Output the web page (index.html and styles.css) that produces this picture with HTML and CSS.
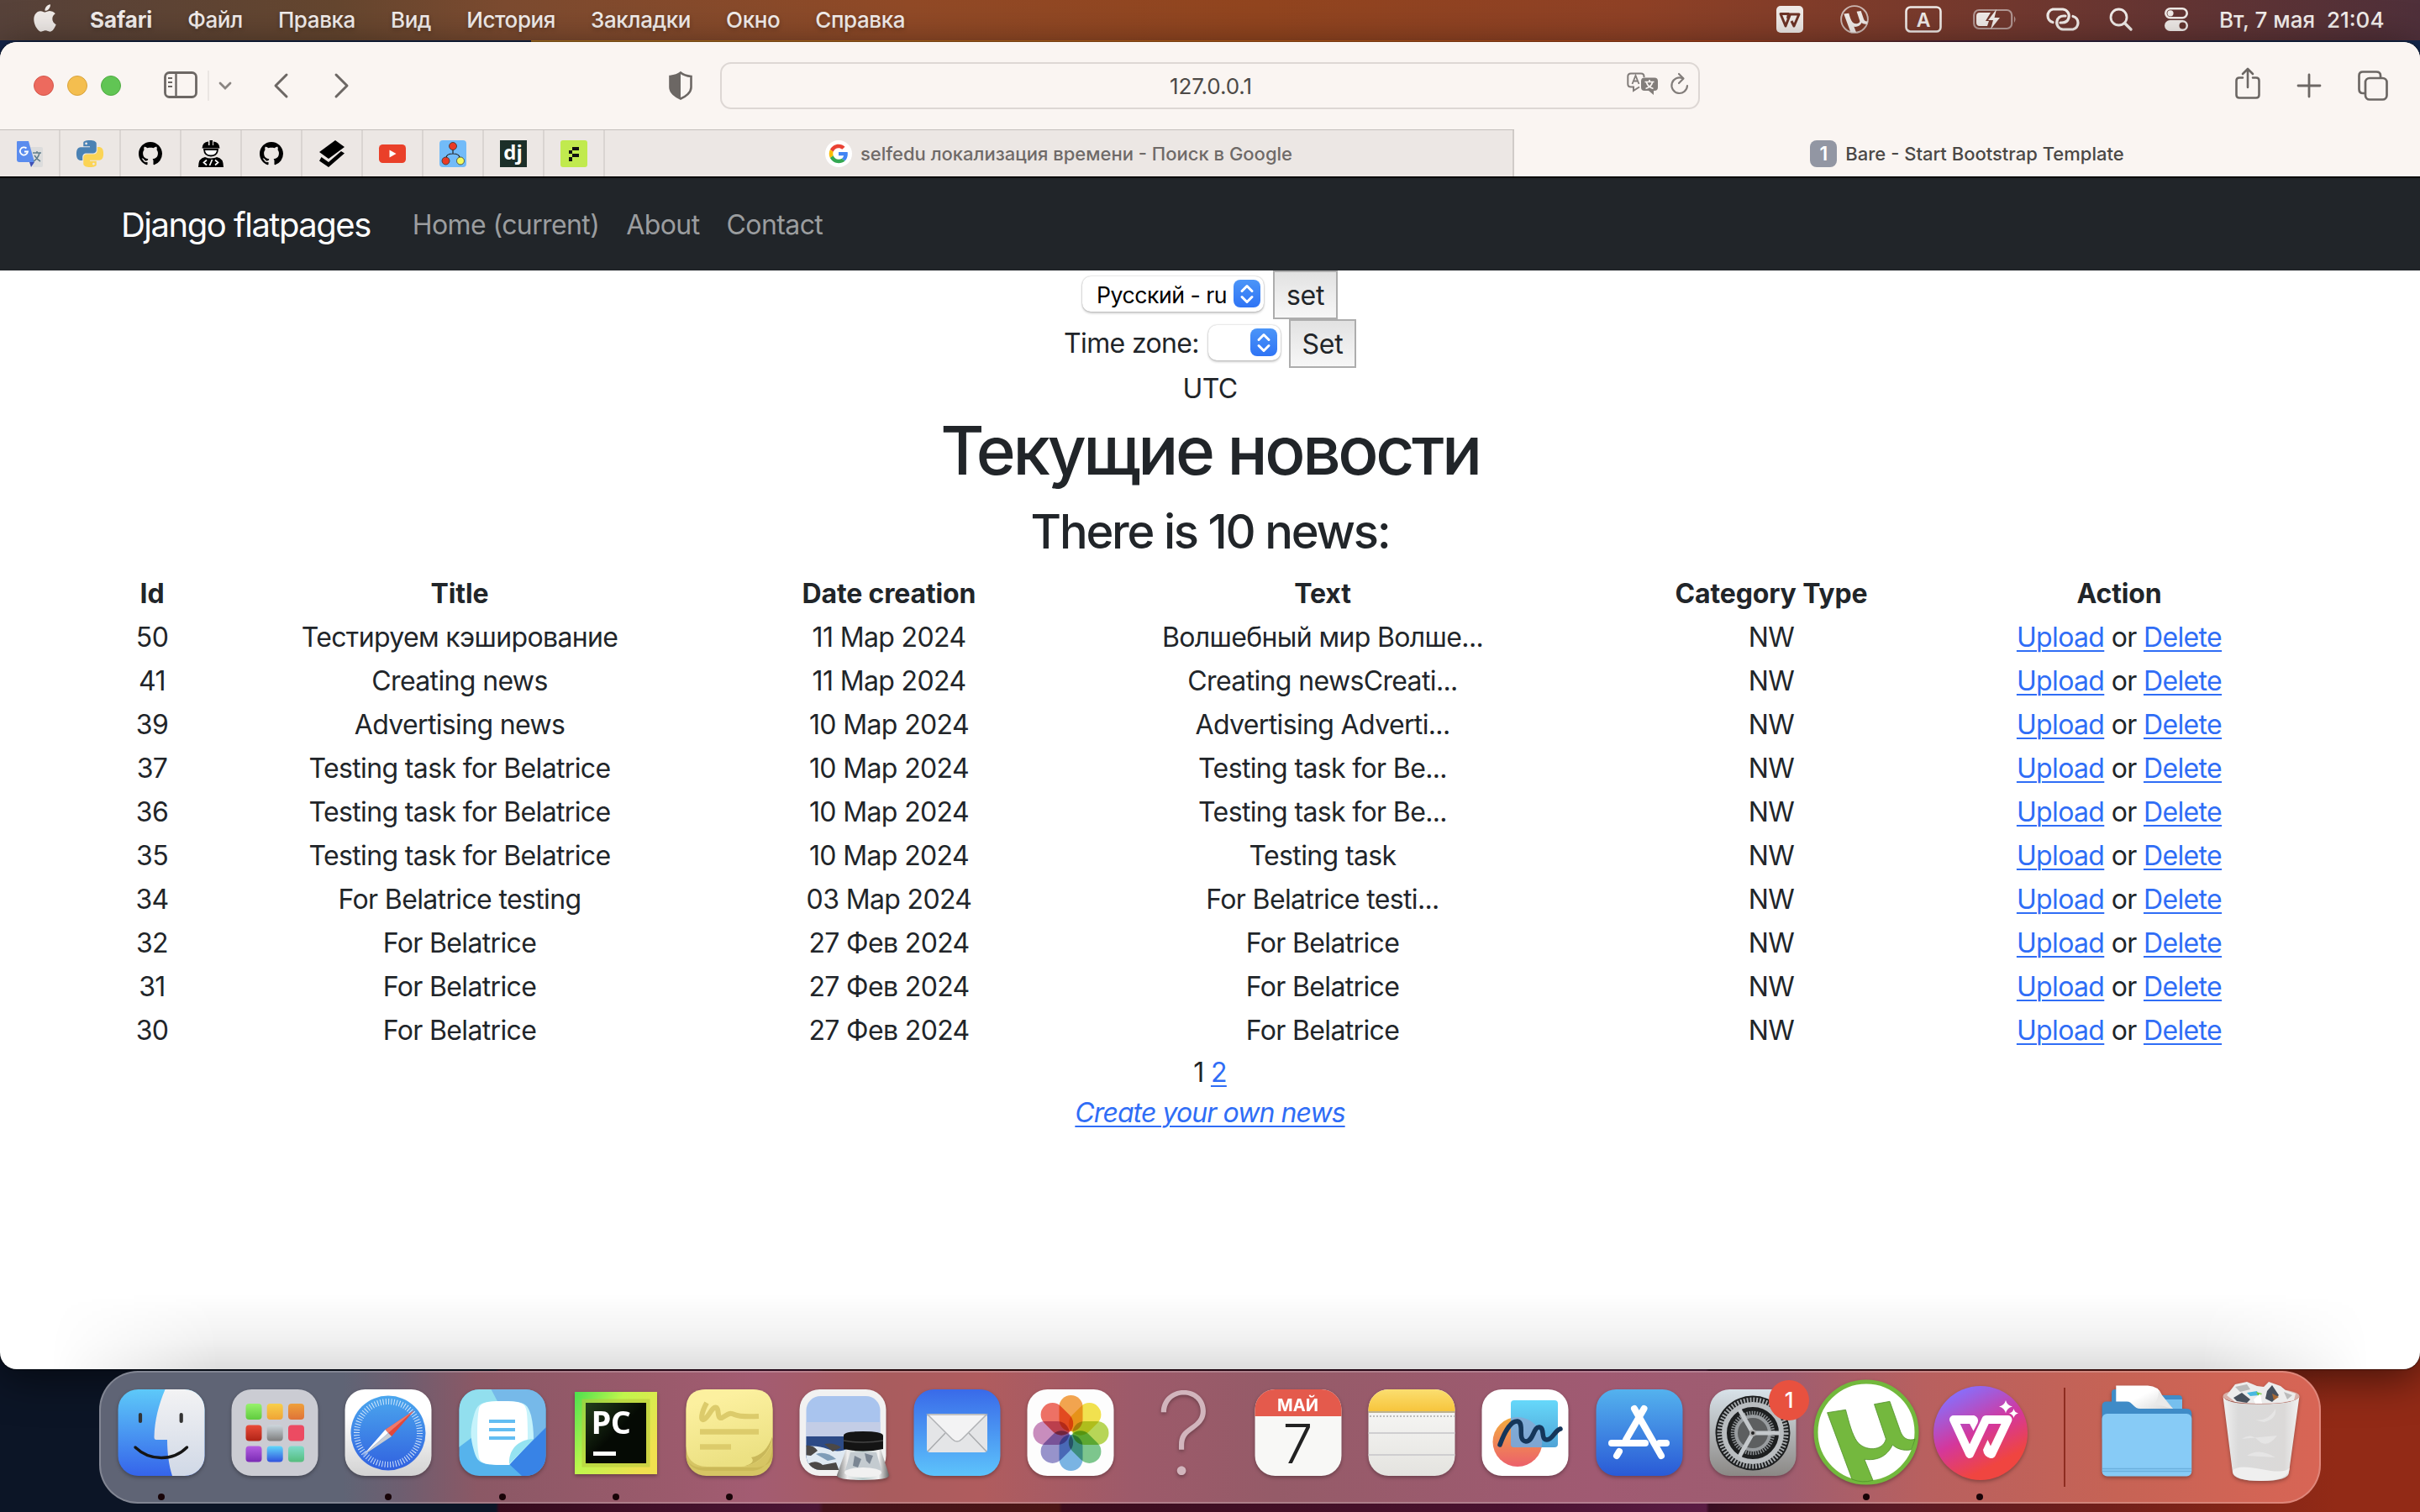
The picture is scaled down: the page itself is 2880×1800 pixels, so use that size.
FILE: index.html
```html
<!DOCTYPE html>
<html lang="ru">
<head>
<meta charset="utf-8">
<title>Bare - Start Bootstrap Template</title>
<link rel="stylesheet" href="styles.css">
</head>
<body>
<div class="desktop">

<header class="menubar">
  <svg class="apple" viewBox="2 0 20 24"><path fill="#f0ebe8" d="M12.152 6.896c-.948 0-2.415-1.078-3.96-1.04-2.04.027-3.91 1.183-4.961 3.014-2.117 3.675-.546 9.103 1.519 12.09 1.013 1.454 2.208 3.09 3.792 3.039 1.52-.065 2.09-.987 3.935-.987 1.831 0 2.35.987 3.96.948 1.637-.026 2.676-1.48 3.676-2.948 1.156-1.688 1.636-3.325 1.662-3.415-.039-.013-3.182-1.221-3.22-4.857-.026-3.04 2.48-4.494 2.597-4.559-1.429-2.09-3.623-2.324-4.39-2.376-2-.156-3.675 1.09-4.61 1.09zM15.53 3.83c.843-1.012 1.4-2.427 1.245-3.83-1.207.052-2.662.805-3.532 1.818-.78.896-1.454 2.338-1.273 3.714 1.338.104 2.715-.688 3.559-1.701"/></svg>
  <nav class="menus">
    <span class="app-name">Safari</span><span>Файл</span><span>Правка</span><span>Вид</span><span>История</span><span>Закладки</span><span>Окно</span><span>Справка</span>
  </nav>
  <div class="status">
    <svg width="32" height="32" viewBox="0 0 32 32"><rect width="32" height="32" rx="5" fill="#f0ebe8"/><path d="M13.500 15L14.500 9.500H5L11 24L16.500 10H27L21 24L18 18" fill="none" stroke="#6e3326" stroke-width="3" stroke-linejoin="round"/></svg>
    <svg width="34" height="34" viewBox="-10 -10 124 124"><circle cx="52" cy="52" r="58" fill="none" stroke="#cdb9b3" stroke-width="7"/><path fill="#f0ebe8" d="M5.600 28.700L27.500 25.300C32 42 36 54 43 64C50 73 72 75 75.400 60L61.500 18.700L80 15.300L92 50C96 60 102 62 109.400 60.300L105.700 72.700C96 75 87 71 83.400 67C76 82 64 86 49.800 84.300L60 109.300L35 108Z"/></svg>
    <svg width="44" height="32" viewBox="0 0 44 32"><rect x="1.500" y="1.500" width="41" height="29" rx="5" fill="none" stroke="#f0ebe8" stroke-width="2.600"/><text x="22" y="24.500" text-anchor="middle" class="key-letter">A</text></svg>
    <svg width="52" height="26" viewBox="0 0 52 26"><rect x="1.200" y="2" width="45" height="22" rx="6" fill="none" stroke="#b29793" stroke-width="2.200"/><path d="M8 5H21L15 15H19L17 21H8Q4 21 4 17V9Q4 5 8 5Z" fill="#f0ebe8"/><path d="M28 1L18 14H24L21 25L32 11H25.500Z" fill="#f0ebe8"/><path d="M49 9q3 4 0 8z" fill="#b29793"/></svg>
    <svg width="44" height="28" viewBox="0 0 44 28"><g fill="none" stroke="#f0ebe8" stroke-width="3.200" stroke-linecap="round"><path d="M10 17.500A8 8 0 0 1 10 2H22A8 8 0 0 1 29 12C28 16 25 18 21 18H19"/><path d="M34 10.500A8 8 0 0 1 34 26H22A8 8 0 0 1 15 16C16 12 19 10 23 10H25"/></g></svg>
    <svg width="28" height="28" viewBox="0 0 28 28"><circle cx="11.500" cy="11.500" r="9.500" fill="none" stroke="#f0ebe8" stroke-width="2.800"/><path d="M18.500 18.500L26 26" stroke="#f0ebe8" stroke-width="3.400" stroke-linecap="round"/></svg>
    <svg width="28" height="28" viewBox="0 0 28 28"><rect x="1.300" y="1.300" width="25.400" height="11" rx="5.500" fill="none" stroke="#f0ebe8" stroke-width="2.600"/><circle cx="7" cy="6.800" r="3.600" fill="#f0ebe8"/><rect y="15" width="28" height="13" rx="6.500" fill="#f0ebe8"/><circle cx="21.500" cy="21.500" r="4" fill="#653630"/></svg>
    <span class="clock">Вт, 7 мая&nbsp; 21:04</span>
  </div>
</header>

<main class="window">
  <div class="toolbar">
    <div class="lights"><i class="red"></i><i class="yellow"></i><i class="green"></i></div>
    <svg class="ic-sidebar" width="40" height="32" viewBox="0 0 40 32"><g fill="none" stroke="#6c6764"><rect x="1.500" y="1.500" width="37" height="29" rx="5" stroke-width="2.800"/><path d="M14.500 2V30" stroke-width="2.400"/><path d="M5 8H10M5 13H10M5 18H10" stroke-width="2"/></g></svg>
    <i class="divider"></i>
    <svg class="ic-chev" width="16" height="10" viewBox="0 0 16 10"><path d="M2 2L8 8L14 2" fill="none" stroke="#8a8582" stroke-width="2.800" stroke-linecap="round"/></svg>
    <svg class="ic-back" width="18" height="30" viewBox="0 0 18 30"><path d="M16 2L3 15L16 28" fill="none" stroke="#6c6764" stroke-width="3" stroke-linecap="round" stroke-linejoin="round"/></svg>
    <svg class="ic-fwd" width="18" height="30" viewBox="0 0 18 30"><path d="M2 2L15 15L2 28" fill="none" stroke="#6c6764" stroke-width="3" stroke-linecap="round" stroke-linejoin="round"/></svg>
    <svg class="ic-shield" width="28" height="34" viewBox="0 0 28 34"><path d="M14 1.500C17 4 22 5.500 26.500 6V19C26.500 25 20 30 14 32.500C8 30 1.500 25 1.500 19V6C6 5.500 11 4 14 1.500Z" fill="none" stroke="#6c6764" stroke-width="2.600"/><path d="M14 1.500C11 4 6 5.500 1.500 6V19C1.500 25 8 30 14 32.500Z" fill="#6c6764"/></svg>
    <div class="address">
      <span class="url">127.0.0.1</span>
      <svg class="ic-translate" width="38" height="28" viewBox="0 0 38 28"><path d="M15 17.500L8 22V17.500H5Q1.300 17.500 1.300 14V5Q1.300 1.500 5 1.500H17Q20.500 1.500 20.500 5V6" fill="none" stroke="#827d7a" stroke-width="2"/><path d="M6.500 14L10.500 4L14.500 14M8 10.500H13" fill="none" stroke="#827d7a" stroke-width="1.800"/><path d="M21 6.500H33Q37 6.500 37 10.500V18Q37 22 33 22H32V27L26 22H21Q17 22 17 18V10.500Q17 6.500 21 6.500Z" fill="#827d7a"/><path d="M21.500 11.500H32.500M27 9V11.500M30.500 12C29.500 16 26 18.500 22.500 19.500M23.500 12C24.500 16 28 18.500 31.500 19.500" stroke="#faf5f2" stroke-width="1.700" fill="none"/></svg>
      <svg class="ic-reload" width="22" height="28" viewBox="0 0 22 28"><path d="M14.500 7.200A9.300 9.300 0 1 0 20 16" fill="none" stroke="#827d7a" stroke-width="2.200" stroke-linecap="round"/><path d="M10 2L15.500 7.500L10 13" fill="none" stroke="#827d7a" stroke-width="2.200" stroke-linecap="round" stroke-linejoin="round"/></svg>
    </div>
    <svg class="ic-share" width="30" height="38" viewBox="0 0 30 38"><g fill="none" stroke="#6c6764" stroke-width="2.600" stroke-linecap="round" stroke-linejoin="round"><path d="M9 12.500H5Q1.500 12.500 1.500 16V33Q1.500 36.500 5 36.500H25Q28.500 36.500 28.500 33V16Q28.500 12.500 25 12.500H21"/><path d="M15 24V2M9 8L15 2L21 8"/></g></svg>
    <svg class="ic-plus" width="28" height="28" viewBox="0 0 28 28"><path d="M14 1V27M1 14H27" stroke="#6c6764" stroke-width="2.800" stroke-linecap="round"/></svg>
    <svg class="ic-tabs" width="36" height="36" viewBox="0 0 36 36"><g fill="none" stroke="#6c6764" stroke-width="2.700"><rect x="9" y="9" width="25.500" height="25.500" rx="5"/><path d="M9 27H6Q1.500 27 1.500 22V6Q1.500 1.500 6 1.500H22Q27 1.500 27 6V9"/></g></svg>
  </div>

  <div class="tabbar">
    <div class="pin"><svg viewBox="0 0 32 32"><path d="M14 8H30Q32 8 32 10V30Q32 32 30 32H20Z" fill="#dcdcdc"/><path d="M2 1H15L22 26H4Q1 26 1 23V2Q1 1 2 1Z" fill="#5b8cee"/><path d="M16 26H22L18 32Z" fill="#3f51b5"/><path d="M12.500 9.500A4.600 4.600 0 1 0 14 13.500H10" fill="none" stroke="#fff" stroke-width="1.800"/><path d="M20 15H30M25 13V15M28 15C27 20 23 24 21 25M22 18C24 21 27 24 29 25" fill="none" stroke="#607d8b" stroke-width="1.500"/></svg></div>
    <div class="pin"><svg viewBox="0 0 24 24"><defs><path id="py" d="M14.250.18l.9.2.73.26.59.3.45.32.34.34.25.34.16.33.1.3.04.26.02.2-.01.13V8.500l-.05.63-.13.55-.21.46-.26.38-.3.31-.33.25-.35.19-.35.14-.33.1-.3.07-.26.04-.21.02H8.770l-.69.05-.59.14-.5.22-.41.27-.33.32-.27.35-.2.36-.15.37-.1.35-.07.32-.04.27-.02.21v3.060H3.170l-.21-.03-.28-.07-.32-.12-.35-.18-.36-.26-.36-.36-.35-.46-.32-.59-.28-.73-.21-.88-.14-1.050-.05-1.230.06-1.220.16-1.040.24-.87.32-.71.36-.57.4-.44.42-.33.42-.24.4-.16.36-.1.32-.05.24-.01h.16l.06.01h8.160v-.83H6.180l-.01-2.750-.02-.37.05-.34.11-.31.17-.28.25-.26.31-.23.38-.2.44-.18.51-.15.58-.12.64-.1.71-.06.77-.04.84-.02 1.270.05zm-6.300 1.980l-.23.33-.08.41.08.41.23.34.33.22.41.09.41-.09.33-.22.23-.34.08-.41-.08-.41-.23-.33-.33-.22-.41-.09-.41.09z"/></defs><use href="#py" fill="#4b82b4"/><use href="#py" fill="#fbd456" transform="rotate(180 12 12)"/></svg></div>
    <div class="pin"><svg class="small" viewBox="0 0 16 16"><path id="gh" d="M8 0C3.580 0 0 3.580 0 8c0 3.540 2.290 6.530 5.470 7.590.4.07.55-.17.55-.38 0-.19-.01-.82-.01-1.490-2.010.37-2.530-.49-2.690-.94-.09-.23-.48-.94-.82-1.130-.28-.15-.68-.52-.01-.53.63-.01 1.080.58 1.230.82.72 1.210 1.870.87 2.330.66.07-.52.28-.87.51-1.070-1.780-.2-3.640-.89-3.640-3.950 0-.87.31-1.590.82-2.150-.08-.2-.36-1.020.08-2.120 0 0 .67-.21 2.200.82.64-.18 1.320-.27 2-.27.68 0 1.360.09 2 .27 1.530-1.040 2.200-.82 2.200-.82.44 1.100.16 1.920.08 2.120.51.56.82 1.270.82 2.150 0 3.070-1.870 3.750-3.650 3.950.29.25.54.73.54 1.480 0 1.070-.01 1.930-.01 2.200 0 .21.15.46.55.38A8.010 8.010 0 0 0 16 8c0-4.420-3.580-8-8-8z"/></svg></div>
    <div class="pin"><svg viewBox="0 0 32 32"><path d="M5.500 9.500Q6 2 13 1.500V6H14.500V0H18V6H19V1.500Q26 2 26.500 9.500Z"/><path d="M8 11H24Q23.500 18.500 16 18.500T8 11Z" fill="#fff" stroke="#000" stroke-width="1.800"/><path d="M1 32Q1 21 9 20Q16 23 23 20Q31 21 31 32Z"/><path d="M11 23.500L7.500 26.500L11 29.500M21 23.500L24.500 26.500L21 29.500M17.500 23L14.500 30" fill="none" stroke="#fff" stroke-width="1.700"/></svg></div>
    <div class="pin"><svg class="small" viewBox="0 0 16 16"><use href="#gh"/></svg></div>
    <div class="pin"><svg viewBox="0 0 32 32"><path d="M20 0L31 8L12 22L1 14Z"/><path d="M27 13L31 15.500L12 32L1 24.500L3.500 20L12 26Z"/></svg></div>
    <div class="pin"><svg viewBox="0 0 32 32"><rect y="5" width="32" height="22" rx="4.500" fill="#ea4029"/><path d="M12.500 11.500V20.500L20.500 16Z" fill="#fff"/></svg></div>
    <div class="pin"><svg viewBox="0 0 32 32"><rect width="32" height="32" rx="4" fill="#72bbf8"/><path d="M16 11V16M8 21Q8 16 16 16T24 21" fill="none" stroke="#222" stroke-width="1.200"/><g stroke="#333" stroke-width=".8"><circle cx="16" cy="7" r="4.500" fill="#ea3b26"/><circle cx="7.500" cy="24.500" r="4.500" fill="#ea3b26"/><circle cx="25" cy="24.500" r="4.500" fill="#f2fb62"/></g></svg></div>
    <div class="pin"><svg viewBox="0 0 32 32"><rect width="32" height="32" fill="#1c2f29"/><text x="15.500" y="23" text-anchor="middle" class="dj">dj</text></svg></div>
    <div class="pin"><svg viewBox="0 0 32 32"><rect width="32" height="32" rx="3" fill="#c1ea4e"/><path d="M14 8H22V12H14ZM10 12H14V16H10ZM14 16H22V20H14ZM10 20H14V25H10Z" fill="#111"/></svg></div>
    <div class="tab">
      <svg class="fav" viewBox="-10 -10 68 68"><circle cx="24" cy="24" r="34" fill="#fff"/><path fill="#ea4335" d="M24 9.500c3.540 0 6.710 1.220 9.210 3.600l6.850-6.850C35.900 2.380 30.470 0 24 0 14.620 0 6.510 5.380 2.560 13.220l7.980 6.190C12.430 13.720 17.740 9.500 24 9.500z"/><path fill="#4285f4" d="M46.980 24.550c0-1.570-.15-3.090-.38-4.550H24v9.020h12.940c-.58 2.960-2.260 5.480-4.780 7.180l7.730 6c4.510-4.180 7.090-10.360 7.090-17.650z"/><path fill="#fbbc05" d="M10.530 28.590c-.48-1.450-.76-2.990-.76-4.590s.27-3.140.76-4.590l-7.980-6.190C.92 16.460 0 20.120 0 24c0 3.880.92 7.540 2.560 10.780l7.970-6.190z"/><path fill="#34a853" d="M24 48c6.480 0 11.930-2.130 15.890-5.810l-7.730-6c-2.150 1.450-4.920 2.300-8.160 2.300-6.260 0-11.570-4.220-13.470-9.910l-7.980 6.190C6.510 42.620 14.620 48 24 48z"/></svg>
      <span class="tab-title">selfedu локализация времени - Поиск в Google</span>
    </div>
    <div class="tab active">
      <b class="letter">1</b>
      <span class="tab-title">Bare - Start Bootstrap Template</span>
    </div>
  </div>

  <nav class="navbar"><a class="brand">Django flatpages</a><a>Home (current)</a><a>About</a><a>Contact</a></nav>

  <section class="page">
    <div class="form-row">
      <span class="select"><span>Русский - ru</span><i class="knob"><svg width="18" height="24" viewBox="0 0 18 24"><path d="M3 8.500L9 2.500L15 8.500M3 15.500L9 21.500L15 15.500" fill="none" stroke="#fff" stroke-width="3" stroke-linecap="round" stroke-linejoin="round"/></svg></i></span>
      <button class="btn b1">set</button>
    </div>
    <div class="form-row">
      <label>Time zone:</label>
      <span class="select empty"><i class="knob"><svg width="18" height="24" viewBox="0 0 18 24"><path d="M3 8.500L9 2.500L15 8.500M3 15.500L9 21.500L15 15.500" fill="none" stroke="#fff" stroke-width="3" stroke-linecap="round" stroke-linejoin="round"/></svg></i></span>
      <button class="btn b2">Set</button>
    </div>
    <p class="line zone">UTC</p>
    <h1>Текущие новости</h1>
    <h2>There is 10 news:</h2>
    <table>
      <colgroup><col class="c1"><col class="c2"><col class="c3"><col class="c4"><col class="c5"><col class="c6"></colgroup>
      <tr><th>Id</th><th>Title</th><th>Date creation</th><th>Text</th><th>Category Type</th><th>Action</th></tr>
      <tr><td>50</td><td>Тестируем кэширование</td><td>11 Мар 2024</td><td>Волшебный мир Волше...</td><td>NW</td><td><a>Upload</a> or <a>Delete</a></td></tr>
      <tr><td>41</td><td>Creating news</td><td>11 Мар 2024</td><td>Creating newsCreati...</td><td>NW</td><td><a>Upload</a> or <a>Delete</a></td></tr>
      <tr><td>39</td><td>Advertising news</td><td>10 Мар 2024</td><td>Advertising Adverti...</td><td>NW</td><td><a>Upload</a> or <a>Delete</a></td></tr>
      <tr><td>37</td><td>Testing task for Belatrice</td><td>10 Мар 2024</td><td>Testing task for Be...</td><td>NW</td><td><a>Upload</a> or <a>Delete</a></td></tr>
      <tr><td>36</td><td>Testing task for Belatrice</td><td>10 Мар 2024</td><td>Testing task for Be...</td><td>NW</td><td><a>Upload</a> or <a>Delete</a></td></tr>
      <tr><td>35</td><td>Testing task for Belatrice</td><td>10 Мар 2024</td><td>Testing task</td><td>NW</td><td><a>Upload</a> or <a>Delete</a></td></tr>
      <tr><td>34</td><td>For Belatrice testing</td><td>03 Мар 2024</td><td>For Belatrice testi...</td><td>NW</td><td><a>Upload</a> or <a>Delete</a></td></tr>
      <tr><td>32</td><td>For Belatrice</td><td>27 Фев 2024</td><td>For Belatrice</td><td>NW</td><td><a>Upload</a> or <a>Delete</a></td></tr>
      <tr><td>31</td><td>For Belatrice</td><td>27 Фев 2024</td><td>For Belatrice</td><td>NW</td><td><a>Upload</a> or <a>Delete</a></td></tr>
      <tr><td>30</td><td>For Belatrice</td><td>27 Фев 2024</td><td>For Belatrice</td><td>NW</td><td><a>Upload</a> or <a>Delete</a></td></tr>
    </table>
    <p class="line">1 <a>2</a></p>
    <p class="line create"><a><em>Create your own news</em></a></p>
  </section>
  <div class="dock-shade"></div>
</main>

<footer class="dock">
  <div class="item run"><svg viewBox="0 0 104 104">
    <defs><linearGradient id="fb" x2="0" y2="1"><stop stop-color="#5ecaf9"/><stop offset="1" stop-color="#3564ea"/></linearGradient><linearGradient id="fw" x2="0" y2="1"><stop stop-color="#f3f3f4"/><stop offset="1" stop-color="#d0d8e6"/></linearGradient><clipPath id="sq"><rect x=".5" y="1" width="103" height="103" rx="24"/></clipPath></defs>
    <g clip-path="url(#sq)"><rect width="104" height="104" fill="url(#fb)"/><path d="M57 0C49 18 44 38 43.500 58Q43.500 61 46 61H59C59 77 61 92 65 104H104V0Z" fill="url(#fw)"/></g>
    <path d="M27 31V39M75.700 31V39" stroke="#333" stroke-width="4.200" stroke-linecap="round"/><path d="M21 70Q34 82.500 52 82.500T82.500 70" fill="none" stroke="#151515" stroke-width="3.400" stroke-linecap="round"/></svg></div>
  <div class="item"><svg viewBox="0 0 104 104">
    <defs><linearGradient id="l1" x2="0" y2="1"><stop stop-color="#97f26c"/><stop offset="1" stop-color="#60cb3f"/></linearGradient><linearGradient id="l2" x2="0" y2="1"><stop stop-color="#f8cf4a"/><stop offset="1" stop-color="#efa436"/></linearGradient><linearGradient id="l3" x2="0" y2="1"><stop stop-color="#efa03a"/><stop offset="1" stop-color="#df7338"/></linearGradient><linearGradient id="l4" x2="0" y2="1"><stop stop-color="#ea4b38"/><stop offset="1" stop-color="#b02417"/></linearGradient><linearGradient id="l5" x2="0" y2="1"><stop stop-color="#ccd6dc"/><stop offset="1" stop-color="#7d7d7d"/></linearGradient><linearGradient id="l7" x2="0" y2="1"><stop stop-color="#b45ee2"/><stop offset="1" stop-color="#7a2bb4"/></linearGradient><linearGradient id="l8" x2="0" y2="1"><stop stop-color="#5fd7fb"/><stop offset="1" stop-color="#3052de"/></linearGradient><linearGradient id="l9" x2="0" y2="1"><stop stop-color="#7fdccb"/><stop offset="1" stop-color="#55bd7d"/></linearGradient></defs>
    <rect x=".5" y="1" width="103" height="103" rx="24" fill="#cbccd3"/>
    <rect x="17.500" y="18" width="19" height="19" rx="4" fill="url(#l1)"/><rect x="42.700" y="18" width="19" height="19" rx="4" fill="url(#l2)"/><rect x="68" y="18" width="19" height="19" rx="4" fill="url(#l3)"/>
    <rect x="17.500" y="43.500" width="19" height="19" rx="4" fill="url(#l4)"/><rect x="42.700" y="43.500" width="19" height="19" rx="4" fill="url(#l5)"/><rect x="68" y="43.500" width="19" height="19" rx="4" fill="#ec4b62"/>
    <rect x="17.500" y="68.500" width="19" height="19" rx="4" fill="url(#l7)"/><rect x="42.700" y="68.500" width="19" height="19" rx="4" fill="url(#l8)"/><rect x="68" y="68.500" width="19" height="19" rx="4" fill="url(#l9)"/></svg></div>
  <div class="item run"><svg viewBox="0 0 104 104">
    <defs><linearGradient id="s1" x2="0" y2="1"><stop offset=".3" stop-color="#fff"/><stop offset="1" stop-color="#d2d2d2"/></linearGradient><linearGradient id="s2" x2="0" y2="1"><stop stop-color="#4ba7ee"/><stop offset="1" stop-color="#3161df"/></linearGradient></defs>
    <rect x=".5" y="1" width="103" height="103" rx="24" fill="url(#s1)"/><circle cx="52" cy="53" r="44.500" fill="url(#s2)"/>
    <circle cx="52" cy="53" r="37.500" fill="none" stroke="#e8f2fd" stroke-width="7" stroke-dasharray="1 2.270" opacity=".85"/>
    <path d="M83 26L56 57L48.500 49Z" fill="#e2483b"/><path d="M83 26L48.500 49L52 53Z" fill="#ee7a6c"/><path d="M21.500 80L48.500 49L52 53Z" fill="#fff"/><path d="M21.500 80L56 57L52 53Z" fill="#c9cdd3"/></svg></div>
  <div class="item run"><svg viewBox="0 0 104 104">
    <g clip-path="url(#sq)"><rect width="104" height="104" fill="#56b3ec"/><path d="M0 0H38L60 25L0 70Z" fill="#92dfee"/><path d="M38 0H104V46L80 80Z" fill="#76b9e9"/><path d="M104 46V104H75L60 90Z" fill="#3883e6"/></g>
    <path d="M52 15C78 15 82 18 86 32Q89 45 89 60L60 91H52C26 91 22 88 18 74Q14.500 62 14.500 53T18 32C22 18 26 15 52 15Z" fill="#c6f3fb"/><path d="M52 15C72 15 78 17 80 24Q82 30 82 60L60 91H52C32 91 26 89 24 82Q22 72 22 53T24 24C26 17 32 15 52 15Z" fill="#fff"/><path d="M89 60L60 90C59 75 68 61 89 60Z" fill="#95e3f1"/><path d="M36 39H67M36 49H67M36 59H67" stroke="#63bdf2" stroke-width="4.200"/></svg></div>
  <div class="item run"><svg viewBox="0 0 104 104">
    <defs><linearGradient id="pc" x2="1" y2=".6"><stop stop-color="#4be04f"/><stop offset=".45" stop-color="#c0f64c"/><stop offset="1" stop-color="#f1e04f"/></linearGradient><linearGradient id="pk" x2=".5" y2=".5"><stop stop-color="#24401c"/><stop offset="1" stop-color="#050a04"/></linearGradient></defs>
    <rect x="3" y="4" width="98" height="98" fill="url(#pc)"/><rect x="11.500" y="12.500" width="81" height="81" fill="#b5c93c" opacity=".6"/><rect x="16" y="17" width="72" height="72" fill="url(#pk)"/><text x="22.500" y="53.500" class="pc">PC</text><rect x="25" y="75" width="27" height="5" fill="#fff"/></svg></div>
  <div class="item run"><svg viewBox="0 0 104 104">
    <defs><linearGradient id="st" x2=".3" y2="1"><stop offset=".2" stop-color="#fcf09f"/><stop offset="1" stop-color="#ece183"/></linearGradient></defs>
    <rect x=".5" y="1" width="103" height="103" rx="24" fill="#d6c564"/><path d="M.5 82Q4 97 24 98H80Q104 95 104 60V80Q103 91 85 94H20Q3 94 .5 80Z" fill="#c3b050" opacity=".6"/>
    <path d="M24 1H80Q103.500 1 103.500 25V58C102 76 84 93 66 93H25Q1 92 .5 68V25Q.5 1 24 1Z" fill="url(#st)"/><path d="M103.500 56C98 72 90 80 78 82Q84 88 70 92.500C88 90 102 74 103.500 56Z" fill="#c9b85a"/>
    <path d="M25 17C18 30 18 38 21 37C28 35 31 20 37 23C40 26 37 36 43 35C50 31 52 28 58 31Q64 34 87 33" fill="none" stroke="#dccb6b" stroke-width="6"/><path d="M17 51.500H87M17 69.500H54" stroke="#dccb6b" stroke-width="6.500"/></svg></div>
  <div class="item"><svg viewBox="0 0 104 104">
    <defs><clipPath id="ph"><rect x="8.500" y="9" width="88" height="88" rx="17"/></clipPath><linearGradient id="jar" x2="1" y2="0"><stop stop-color="#777"/><stop offset=".2" stop-color="#eee"/><stop offset=".5" stop-color="#bcc"/><stop offset=".8" stop-color="#f2f2f2"/><stop offset="1" stop-color="#666"/></linearGradient></defs>
    <rect x=".5" y="1" width="103" height="103" rx="24" fill="#f1f1f1"/><g clip-path="url(#ph)"><rect width="104" height="104" fill="#a9c4ee"/><rect y="40" width="104" height="20" fill="#c3cde6"/><rect y="57" width="104" height="47" fill="#2c4a86"/><path d="M0 70Q20 66 34 72T60 70V104H0Z" fill="#dfe9f2"/><path d="M0 70Q15 64 22 74L14 80L0 78ZM30 66Q42 64 50 70L40 75ZM10 90Q20 84 28 91L44 88L50 104H8Z" fill="#4b4846"/><path d="M20 78Q32 74 44 84L34 86Z" fill="#7f9db8"/></g>
    <path d="M56 72H97L107 103Q108 109 76 109T45 103Z" fill="url(#jar)"/><path d="M61 76H92L98 97Q76 104 55 97Z" fill="#c4cbd0"/><ellipse cx="76" cy="100" rx="22" ry="6" fill="#f1f1f1"/><path d="M66 80L74 84L70 94L64 92ZM78 77L88 80L84 90L80 86Z" fill="#7a8592"/><path d="M53 56Q53 51 76 51T100 56V72Q76 77 53 72Z" fill="#141414"/><path d="M53 62Q76 66 100 62" stroke="#444" fill="none" stroke-width="1.500"/></svg></div>
  <div class="item"><svg viewBox="0 0 104 104">
    <defs><linearGradient id="ml" x2="0" y2="1"><stop stop-color="#396ae9"/><stop offset="1" stop-color="#5dc3fb"/></linearGradient></defs>
    <rect x=".5" y="1" width="103" height="103" rx="24" fill="url(#ml)"/><rect x="16" y="30" width="72" height="46" rx="4" fill="#e4e5e7"/><path d="M17 75L38 53M87 75L66 53" stroke="#a9abae" stroke-width="1.500"/><path d="M17 31L46 60Q52 66 58 60L87 31Z" fill="#f3f3f4" stroke="#b0b2b5" stroke-width="1.500"/></svg></div>
  <div class="item"><svg viewBox="0 0 104 104">
    <rect x=".5" y="1" width="103" height="103" rx="24" fill="#fdfdfd"/>
    <g class="petals"><rect x="38.500" y="8" width="28" height="43" rx="14" fill="#f39b3b"/><rect x="38.500" y="8" width="28" height="43" rx="14" fill="#f2e03c" transform="rotate(45 52.500 53)"/><rect x="38.500" y="8" width="28" height="43" rx="14" fill="#b2d346" transform="rotate(90 52.500 53)"/><rect x="38.500" y="8" width="28" height="43" rx="14" fill="#70c282" transform="rotate(135 52.500 53)"/><rect x="38.500" y="8" width="28" height="43" rx="14" fill="#6daee2" transform="rotate(180 52.500 53)"/><rect x="38.500" y="8" width="28" height="43" rx="14" fill="#8d88c8" transform="rotate(225 52.500 53)"/><rect x="38.500" y="8" width="28" height="43" rx="14" fill="#c582b8" transform="rotate(270 52.500 53)"/><rect x="38.500" y="8" width="28" height="43" rx="14" fill="#ee6255" transform="rotate(315 52.500 53)"/></g></svg></div>
  <div class="item"><svg viewBox="0 0 104 104"><text x="52" y="102" text-anchor="middle" class="missing">?</text></svg></div>
  <div class="item"><svg viewBox="0 0 104 104">
    <g clip-path="url(#sq)"><rect width="104" height="104" fill="#f8f8f6"/><rect width="104" height="33" fill="#e45a4c"/></g><text x="51.500" y="26.500" text-anchor="middle" class="cal-m">МАЙ</text><text x="51.500" y="89" text-anchor="middle" class="cal-d">7</text></svg></div>
  <div class="item"><svg viewBox="0 0 104 104">
    <defs><linearGradient id="ny" x2="0" y2="1"><stop stop-color="#fbdf72"/><stop offset="1" stop-color="#f7c53c"/></linearGradient><linearGradient id="nw" x2="0" y2="1"><stop stop-color="#fbfbfa"/><stop offset="1" stop-color="#e4e3df"/></linearGradient></defs>
    <g clip-path="url(#sq)"><rect width="104" height="104" fill="url(#nw)"/><rect width="104" height="27" fill="url(#ny)"/><path d="M0 28H104" stroke="#a99a6d" stroke-width="1.500"/><path d="M2 33H104" stroke="#bbb" stroke-width="2" stroke-dasharray="2 2"/><path d="M0 53H104M0 79H104" stroke="#cfced0" stroke-width="1.800"/></g></svg></div>
  <div class="item"><svg viewBox="0 0 104 104">
    <defs><linearGradient id="fo" x2="0" y2="1"><stop stop-color="#f3ad3e"/><stop offset="1" stop-color="#ec606b"/></linearGradient><linearGradient id="fq" x2="0" y2="1"><stop stop-color="#66d8fa"/><stop offset="1" stop-color="#4fa3d6"/></linearGradient></defs>
    <rect x=".5" y="1" width="103" height="103" rx="24" fill="#fff"/><circle cx="43" cy="63.500" r="29.500" fill="url(#fo)"/><rect x="35" y="14" width="56" height="56" rx="4" fill="url(#fq)"/><path d="M35 35A29.500 29.500 0 0 1 71.500 70H39Q35 70 35 66Z" fill="#8ea6d0" opacity=".75"/><path d="M22 67C27 53 35 38 43 39C52 41 42 62 53 63C62 63 62 45 69 46C76 47 70 61 78 61C85 61 87 50 94 48" fill="none" stroke="#15365a" stroke-width="5.500" stroke-linecap="round"/></svg></div>
  <div class="item"><svg viewBox="0 0 104 104">
    <defs><linearGradient id="as" x2="0" y2="1"><stop stop-color="#54b2ee"/><stop offset="1" stop-color="#2a5ad6"/></linearGradient></defs>
    <rect x=".5" y="1" width="103" height="103" rx="24" fill="url(#as)"/><g stroke="#fff" stroke-width="8" stroke-linecap="round"><path d="M46 24L78 80M57.500 24L36 61M28 75L25 80M19 65H59M76 65H84"/></g></svg></div>
  <div class="item"><svg viewBox="0 0 104 104">
    <defs><linearGradient id="sg" x2="0" y2="1"><stop stop-color="#d8e2e9"/><stop offset="1" stop-color="#8b8885"/></linearGradient></defs>
    <rect x=".5" y="1" width="103" height="103" rx="24" fill="url(#sg)"/><circle cx="52" cy="53" r="44.500" fill="#1d1f20"/><circle cx="52" cy="53" r="39.500" fill="none" stroke="#a7abae" stroke-width="6" stroke-dasharray="1.900 1.900"/><circle cx="52" cy="53" r="34" fill="none" stroke="#b9bdc0" stroke-width="6"/><circle cx="52" cy="53" r="24" fill="none" stroke="#8d9194" stroke-width="4.500" stroke-dasharray="1.500 1.500"/><circle cx="52" cy="53" r="20" fill="#5d5f60" stroke="#999da0" stroke-width="4"/><path d="M52 53H84M52 53L36 25M52 53L36 81" stroke="#c4c8cb" stroke-width="5"/><circle cx="52" cy="53" r="4" fill="#aaa"/><circle cx="52" cy="53" r="2" fill="#222"/></svg><b class="badge">1</b></div>
  <div class="item run"><svg viewBox="0 0 104 104">
    <circle cx="52" cy="52" r="60" fill="#fff" stroke="#72b83c" stroke-width="5"/><path fill="#74b83e" stroke="#4f8f2a" stroke-width=".8" d="M5.600 28.700L27.500 25.300C32 42 35 54 41 63C50 75 72 75 75.400 60L61.500 18.700L80 15.300L93 52C97 61 103 62 110 60.300L105.700 72.700C96 75 87 71 83.400 67C76 82 64 86 49.800 84.300L60 109.300Q47 113 35 108Z"/></svg></div>
  <div class="item run"><svg viewBox="0 0 104 104">
    <defs><linearGradient id="wp" x1=".2" y1="0" x2=".7" y2="1"><stop offset=".08" stop-color="#8b6cf7"/><stop offset=".5" stop-color="#d4379c"/><stop offset=".85" stop-color="#f04540"/></linearGradient></defs>
    <circle cx="53" cy="53" r="56" fill="url(#wp)"/><path d="M44 37H21L40 78L59.500 37H85.500L66 78" fill="none" stroke="#fff" stroke-width="10" stroke-linejoin="round" stroke-linecap="round"/><path d="M44 32Q52 34 49.500 41L44.500 50.500L37.500 37ZM61.500 61L56 73Q57 82 66 83L68 75Z" fill="#fff"/><path d="M83 14Q84.500 20 91 21.500Q84.500 23 83 29.500Q81.500 23 75 21.500Q81.500 20 83 14ZM92.500 24Q93.500 28.500 98 29.500Q93.500 30.500 92.500 35Q91.500 30.500 87 29.500Q91.500 28.500 92.500 24Z" fill="#fff"/></svg></div>
  <i class="dock-sep"></i>
  <div class="item"><svg viewBox="0 0 104 104">
    <defs><linearGradient id="pp" x2="1" y2="1"><stop offset=".4" stop-color="#fff"/><stop offset="1" stop-color="#cfcfcf"/></linearGradient></defs>
    <path d="M10 5Q10 1 14 1H26Q30 1 33 8H90Q94 8 94 12V40H10Z" fill="#3f8cc8"/><path d="M20 13H94V40H20Z" fill="#76bfee"/><path d="M15.300 -3.500H53Q66 -3 70 8L83 24V30H15.300Z" fill="url(#pp)"/><path d="M61 18Q68 20 83 24Q72 14 66 2Q66 12 61 18Z" fill="#e9e9e9"/>
    <path d="M-1.400 21Q-1.400 15.500 4 15.500H28C35 15.500 36 24 44 24H99Q105.300 24 105.300 30V60H-1.400Z" fill="#3f8bc7"/><rect x="-1.400" y="30" width="106.700" height="74.500" rx="6" fill="#87cbf6"/><path d="M-1 95.500H105M-1 98.500H105" stroke="#6bb0de" stroke-width="1.500"/></svg></div>
  <div class="item"><svg viewBox="0 0 104 104">
    <defs><linearGradient id="tr" x2="1" y2="0"><stop stop-color="#f0f0f0"/><stop offset=".2" stop-color="#dadada"/><stop offset=".8" stop-color="#dbd9d8"/><stop offset="1" stop-color="#f2f2f2"/></linearGradient></defs>
    <path d="M7.500 9L19 100Q20 110 53 110T86 100L98.500 9Q96 18 53 18.500T7.500 9Z" fill="url(#tr)"/><ellipse cx="53" cy="9" rx="45.500" ry="9.500" fill="#d9b1aa"/><path d="M12 8L22 -5L36 -8L48 -3L56 -2L62 -8L76 -3L82 2L94 6L92 14L76 17L50 18L22 16Z" fill="#ececec"/><path d="M20 11L30 5L40 13L36 17L24 15ZM60 3L66 -4L74 8L66 16L58 12Z" fill="#47505c"/><path d="M36 5L48 3L50 8L40 9Z" fill="#48b8e0"/><path d="M47 4L54 6L50 10Z" fill="#73c93e"/><path d="M66 6L74 10L68 14Z" fill="#a86a35"/><path d="M22 -2L36 -5L40 1L28 4ZM80 4L90 8L84 13Z" fill="#bbb"/><path d="M44 13L52 6L54 18H46Z" fill="#fff"/><path d="M40 36Q60 42 70 24Q72 36 56 40ZM30 60Q40 52 50 62T72 56M36 80Q50 70 70 82" fill="#ececec" opacity=".6"/><path d="M19 98Q24 90 53 96T87 94Q86 110 53 110T19 98Z" fill="#f4f4f4" opacity=".8"/></svg></div>
</footer>
</div>
</body>
</html>
```
FILE: styles.css
```css
* { box-sizing: border-box; }
body { margin: 0; font-family: Inter, "Liberation Sans", sans-serif; }
svg { display: block; flex: none; overflow: visible; }
i { display: block; flex: none; }

.desktop {
  width: 2880px; height: 1800px; overflow: hidden;
  display: flex; flex-direction: column;
  background:
    linear-gradient(90deg, #14254a 0 632px, #b87a22 632px, #c8641c 1500px, #b8461c 2050px, #4a2440 2350px, #14284e 2700px) top / 100% 90px no-repeat,
    linear-gradient(90deg, #0c1526 0 590px, #360a1c 594px, #4c1636 974px, #43121a 980px, #4c1616 1260px, #3a0c1c 1264px, #4a1230 1800px, #5a1c44 2030px, #380d22 2034px, #4a1420 2125px, #5a1a25 2250px, #701f1a 2500px, #922a16 2780px);
}

/* menu bar */
.menubar {
  height: 48px; margin-bottom: 2px; flex: none;
  display: flex; align-items: center; padding: 0 38px 2px 40px;
  color: #f3eeec; font-size: 26px; font-weight: 500;
  background: linear-gradient(90deg, #57423a, #65462f 400px, #7c4b30 600px, #914a27 1080px, #92451f 1500px, #8f4126 1950px, #71382f 2400px, #4f303a);
}
.apple { width: 27px; height: 33px; margin: -4px 40px 0 0; }
.menus { display: flex; gap: 42px; flex: 1; letter-spacing: -.4px; text-shadow: 0 2px 5px rgba(0,0,0,.25); }
.app-name { font-weight: 700; letter-spacing: -.1px; }
.status { display: flex; align-items: center; }
.status svg + svg { margin-left: 37px; }
.status svg:nth-child(2) { margin-left: 44px; }
.status svg:nth-child(3) { margin-left: 43px; }
.status svg:nth-child(5) { margin-left: 33px; }
.status svg:nth-child(6) { margin-left: 33px; }
.status svg:nth-child(7) { margin-left: 38px; }
.clock { margin-left: 37px; width: 201px; white-space: nowrap; }
.key-letter { font: 600 23px Inter, sans-serif; fill: #f0ebe8; }

/* browser window */
.window { height: 1580px; flex: none; border-radius: 20px; overflow: hidden; background: #fff; display: flex; flex-direction: column; box-shadow: 0 0 2px #000, 0 10px 50px rgba(0,0,0,.55); position: relative; }
.toolbar { height: 104px; flex: none; display: flex; align-items: center; background: #faf5f2; padding-right: 38px; }
.lights { display: flex; gap: 16px; margin: 0 51px 0 40px; }
.lights i { width: 24px; height: 24px; border-radius: 50%; }
.red { background: #ed6a5e; border: 1px solid #d5564b; }
.yellow { background: #f4be4f; border: 1px solid #d9a33c; }
.green { background: #61c554; border: 1px solid #4fab42; }
.ic-sidebar { margin-top: -2px; }
.divider { width: 2px; height: 36px; background: #ebe6e3; margin: 0 11px 0 12px; }
.ic-back { margin-left: 49px; }
.ic-fwd { margin-left: 55px; }
.ic-shield { margin-left: 380px; }
.address { width: 1166px; height: 56px; margin: 0 0 0 33px; border: 2px solid #ddd7d4; border-radius: 13px; display: flex; align-items: center; padding-right: 11px; }
.url { flex: 1; text-align: center; padding-left: 87px; font-size: 26px; color: #4c4947; letter-spacing: -.1px; }
.ic-reload { margin: -4px 0 0 14px; }
.ic-translate { margin-top: -4px; }
.ic-share { margin: -6px 0 0 637px; }
.ic-plus { margin-left: 44px; }
.ic-tabs { margin-left: 44px; }

.tabbar { height: 56px; flex: none; display: flex; background: #ece7e4; border-top: 1px solid #c4bfbc; font-size: 22px; }
.pin { width: 72px; border-right: 2px solid #d9d4d1; display: flex; align-items: center; justify-content: center; }
.pin svg { width: 32px; height: 32px; }
.pin svg.small { width: 28px; height: 28px; }
.dj { font: 700 24px "Open Sans", sans-serif; fill: #fff; }
.tab { width: 1082px; border-right: 2px solid #d0cbc8; display: flex; align-items: center; justify-content: center; gap: 10px; color: #6f6a68; font-weight: 500; }
.tab.active { width: auto; flex: 1; margin-top: -1px; padding-top: 1px; background: #faf5f2; border: 0; color: #4b4846; }
.fav { width: 32px; height: 32px; }
.letter { width: 32px; height: 32px; border-radius: 8px; background: #9296a3; color: #fff; text-align: center; line-height: 33px; font-weight: 600; font-size: 23px; }

/* site content */
.navbar { height: 112px; flex: none; background: #212529; border-top: 2px solid #000; display: flex; align-items: center; padding-left: 144px; font-size: 32px; letter-spacing: -.6px; color: #9b9d9f; }
.navbar a + a { margin-left: 32px; }
.navbar .brand { color: #fff; font-size: 40px; letter-spacing: -1.500px; margin-right: 18px; }
.page { text-align: center; color: #212529; font-size: 32px; line-height: 48px; letter-spacing: -.64px; padding: 0 144px; }
.form-row { height: 58px; display: flex; justify-content: center; align-items: center; }
.select { height: 42px; width: 216px; margin-top: -3px; border-radius: 10px; box-shadow: 0 0 2px rgba(0,0,0,.3), 0 2px 3px rgba(0,0,0,.2); display: flex; align-items: center; justify-content: flex-end; font-size: 26.670px; letter-spacing: -.5px; color: #000; padding-right: 4px; }
.select span { margin: 3px 8px 0 0; white-space: nowrap; }
.select.empty { width: 86px; margin-left: 11px; }
.knob { width: 32px; height: 33px; border-radius: 8px; background: linear-gradient(#4b95f8, #2f74f5); display: flex; align-items: center; justify-content: center; }
.btn { height: 58px; padding: 0; margin: 0 0 0 11px; border: 2px solid #adadad; background: linear-gradient(#e2e2e2, #f7f7f7); font: 32px Inter, sans-serif; letter-spacing: -.3px; color: #212529; }
.b1 { width: 77px; }
.b2 { width: 80px; margin-left: 10px; }
p.line { margin: 0; height: 48px; }
p.zone { height: 50px; padding-top: 1px; }
h1 { margin: 0 0 16px; font-size: 80px; line-height: 96px; font-weight: 500; letter-spacing: -3.400px; }
h2 { margin: 0 0 14px; font-size: 56px; line-height: 67px; font-weight: 500; letter-spacing: -2.200px; }
table { width: 2592px; table-layout: fixed; border-collapse: collapse; }
td, th { padding: 2px; height: 52px; }
th { font-weight: 700; letter-spacing: -.150px; }
.create { letter-spacing: -.920px; }
.c1 { width: 74px; } .c2 { width: 658px; } .c3 { width: 364px; } .c4 { width: 668px; } .c5 { width: 400px; } .c6 { width: 428px; }
.page a { color: #2f6df6; text-decoration: underline; text-decoration-thickness: 2px; text-underline-offset: 4px; }
.dock-shade { position: absolute; left: 0; right: 0; bottom: 0; height: 90px; background: linear-gradient(rgba(0,0,0,0), rgba(0,0,0,.055) 60%, rgba(0,0,0,.13)); -webkit-mask-image: linear-gradient(90deg, transparent 60px, #000 260px, #000 2620px, transparent 2820px); mask-image: linear-gradient(90deg, transparent 60px, #000 260px, #000 2620px, transparent 2820px); }

/* dock */
.dock {
  position: relative; flex: none; width: 2644px; height: 158px; margin: 2px 0 0 118px; padding: 0 0 0 4px;
  border: 2px solid rgba(255,255,255,.22); border-radius: 46px; display: flex;
  background: linear-gradient(90deg, #5f6475 0 290px, #6e5e70 360px, #8b5865 450px, #9b5a6c 680px, #a35c72 780px, #a85c5e 930px, #b05c5e 1050px, #9d5a6a 1230px, #955b68 1400px, #a05a72 1780px, #9e5d70 2000px, #b8605f 2170px, #c66355 2400px, #d86555);
  background-clip: border-box; background-origin: border-box;
}
.item { width: 135.300px; height: 154px; flex: none; padding-top: 19px; display: flex; flex-direction: column; align-items: center; position: relative; }
.item svg { width: 104px; height: 104px; filter: drop-shadow(0 2px 2px rgba(0,0,0,.3)); }
.item.run::after { content: ""; width: 8px; height: 8px; border-radius: 50%; background: #180408; margin-top: 21px; }
.dock-sep { width: 2px; height: 118px; margin: 18px 29px 0 32px; background: #8e2c20; }
.badge { position: absolute; left: 87px; top: 9px; width: 48px; height: 48px; border-radius: 50%; background: #e8513f; color: #fff; font-size: 26px; font-weight: 500; line-height: 48px; text-align: center; }
.pc { font: 700 38px "Open Sans", sans-serif; fill: #fff; letter-spacing: -.5px; }
.missing { font: 200 136px Inter, sans-serif; fill: #d2b5bd; }
.cal-m { font: 700 20px Inter, sans-serif; fill: #fff; }
.cal-d { font: 300 64px Inter, sans-serif; fill: #222; }
.petals rect { mix-blend-mode: multiply; opacity: .9; }
```
